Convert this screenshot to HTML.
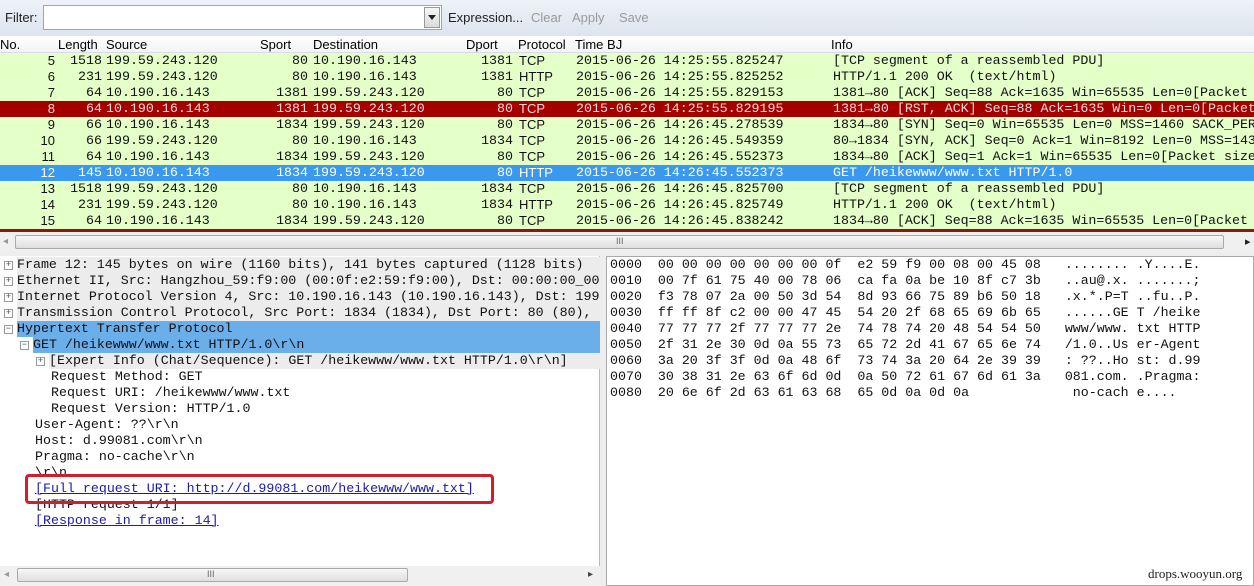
<!DOCTYPE html>
<html><head><meta charset="utf-8"><style>
*{margin:0;padding:0;box-sizing:border-box}
body{width:1254px;height:586px;overflow:hidden;background:#fff;position:relative;font-family:"Liberation Sans",sans-serif}
.a{position:absolute;white-space:pre}
.m{font-family:"Liberation Mono",monospace;font-size:13.3px}
.s{font-family:"Liberation Sans",sans-serif;font-size:13px}
.row{position:absolute;left:0;width:1254px;height:16px;background:#e4ffc8;line-height:16px;color:#101010}
.row span{position:absolute;white-space:pre;top:0}
.red{background:#a40000;color:#ffd8d8}
.sel{background:#3a99ee;color:#fff}
.c1{right:1199px;font-family:"Liberation Sans",sans-serif;font-size:13px}
.c2{right:1152px;font-family:"Liberation Mono",monospace;font-size:13.3px}
.c3{left:106px;font-family:"Liberation Mono",monospace;font-size:13.3px}
.c4{right:946px;font-family:"Liberation Mono",monospace;font-size:13.3px}
.c5{left:313px;font-family:"Liberation Mono",monospace;font-size:13.3px}
.c6{right:741px;font-family:"Liberation Mono",monospace;font-size:13.3px}
.c7{left:519px;font-family:"Liberation Sans",sans-serif;font-size:13px}
.c8{left:576px;font-family:"Liberation Mono",monospace;font-size:13.3px}
.c9{left:833px;font-family:"Liberation Mono",monospace;font-size:13.3px}
.d{position:absolute;height:16px;line-height:16px;font-family:"Liberation Mono",monospace;font-size:13.3px;white-space:pre;color:#111}
.bx{position:absolute;width:9px;height:9px;border:1px solid #999;background:#fff;font-size:9px;line-height:7px;text-align:center;color:#555;font-family:"Liberation Mono",monospace}
.h{position:absolute;left:610px;font-family:"Liberation Mono",monospace;font-size:13.3px;line-height:16px;white-space:pre;color:#111}
</style></head><body>
<div class="a" style="left:0;top:0;width:1254px;height:36px;background:linear-gradient(#eef2f8,#dde4ee)"></div>
<div class="a s" style="left:5px;top:10px;color:#222">Filter:</div>
<div class="a" style="left:43px;top:5px;width:399px;height:25px;background:#fff;border:1px solid #9aa6b8"></div>
<div class="a" style="left:424px;top:7px;width:16px;height:21px;border:1px solid #999;background:linear-gradient(#f6f6f6,#dcdcdc)"></div>
<div class="a" style="left:428px;top:15px;width:0;height:0;border-left:4px solid transparent;border-right:4px solid transparent;border-top:5px solid #222"></div>
<div class="a s" style="left:448px;top:10px;color:#222">Expression...</div>
<div class="a s" style="left:531px;top:10px;color:#999">Clear</div>
<div class="a s" style="left:572px;top:10px;color:#999">Apply</div>
<div class="a s" style="left:619px;top:10px;color:#999">Save</div>
<div class="a" style="left:0;top:36px;width:1254px;height:17px;background:linear-gradient(#fff,#f1f3f6);border-bottom:1px solid #d8dde4"></div>
<div class="a s" style="left:0;top:37px">No.</div>
<div class="a s" style="left:58px;top:37px">Length</div>
<div class="a s" style="left:106px;top:37px">Source</div>
<div class="a s" style="left:260px;top:37px">Sport</div>
<div class="a s" style="left:313px;top:37px">Destination</div>
<div class="a s" style="left:466px;top:37px">Dport</div>
<div class="a s" style="left:518px;top:37px">Protocol</div>
<div class="a s" style="left:575px;top:37px">Time BJ</div>
<div class="a s" style="left:831px;top:37px">Info</div>

<div class="row" style="top:53px"><span class="c1">5</span><span class="c2">1518</span><span class="c3">199.59.243.120</span><span class="c4">80</span><span class="c5">10.190.16.143</span><span class="c6">1381</span><span class="c7">TCP</span><span class="c8">2015-06-26 14:25:55.825247</span><span class="c9">[TCP segment of a reassembled PDU]</span></div>
<div class="row" style="top:69px"><span class="c1">6</span><span class="c2">231</span><span class="c3">199.59.243.120</span><span class="c4">80</span><span class="c5">10.190.16.143</span><span class="c6">1381</span><span class="c7">HTTP</span><span class="c8">2015-06-26 14:25:55.825252</span><span class="c9">HTTP/1.1 200 OK  (text/html)</span></div>
<div class="row" style="top:85px"><span class="c1">7</span><span class="c2">64</span><span class="c3">10.190.16.143</span><span class="c4">1381</span><span class="c5">199.59.243.120</span><span class="c6">80</span><span class="c7">TCP</span><span class="c8">2015-06-26 14:25:55.829153</span><span class="c9">1381→80 [ACK] Seq=88 Ack=1635 Win=65535 Len=0[Packet</span></div>
<div class="row red" style="top:101px"><span class="c1">8</span><span class="c2">64</span><span class="c3">10.190.16.143</span><span class="c4">1381</span><span class="c5">199.59.243.120</span><span class="c6">80</span><span class="c7">TCP</span><span class="c8">2015-06-26 14:25:55.829195</span><span class="c9">1381→80 [RST, ACK] Seq=88 Ack=1635 Win=0 Len=0[Packet</span></div>
<div class="row" style="top:117px"><span class="c1">9</span><span class="c2">66</span><span class="c3">10.190.16.143</span><span class="c4">1834</span><span class="c5">199.59.243.120</span><span class="c6">80</span><span class="c7">TCP</span><span class="c8">2015-06-26 14:26:45.278539</span><span class="c9">1834→80 [SYN] Seq=0 Win=65535 Len=0 MSS=1460 SACK_PER</span></div>
<div class="row" style="top:133px"><span class="c1">10</span><span class="c2">66</span><span class="c3">199.59.243.120</span><span class="c4">80</span><span class="c5">10.190.16.143</span><span class="c6">1834</span><span class="c7">TCP</span><span class="c8">2015-06-26 14:26:45.549359</span><span class="c9">80→1834 [SYN, ACK] Seq=0 Ack=1 Win=8192 Len=0 MSS=143</span></div>
<div class="row" style="top:149px"><span class="c1">11</span><span class="c2">64</span><span class="c3">10.190.16.143</span><span class="c4">1834</span><span class="c5">199.59.243.120</span><span class="c6">80</span><span class="c7">TCP</span><span class="c8">2015-06-26 14:26:45.552373</span><span class="c9">1834→80 [ACK] Seq=1 Ack=1 Win=65535 Len=0[Packet size</span></div>
<div class="row sel" style="top:165px"><span class="c1">12</span><span class="c2">145</span><span class="c3">10.190.16.143</span><span class="c4">1834</span><span class="c5">199.59.243.120</span><span class="c6">80</span><span class="c7">HTTP</span><span class="c8">2015-06-26 14:26:45.552373</span><span class="c9">GET /heikewww/www.txt HTTP/1.0</span></div>
<div class="row" style="top:181px"><span class="c1">13</span><span class="c2">1518</span><span class="c3">199.59.243.120</span><span class="c4">80</span><span class="c5">10.190.16.143</span><span class="c6">1834</span><span class="c7">TCP</span><span class="c8">2015-06-26 14:26:45.825700</span><span class="c9">[TCP segment of a reassembled PDU]</span></div>
<div class="row" style="top:197px"><span class="c1">14</span><span class="c2">231</span><span class="c3">199.59.243.120</span><span class="c4">80</span><span class="c5">10.190.16.143</span><span class="c6">1834</span><span class="c7">HTTP</span><span class="c8">2015-06-26 14:26:45.825749</span><span class="c9">HTTP/1.1 200 OK  (text/html)</span></div>
<div class="row" style="top:213px"><span class="c1">15</span><span class="c2">64</span><span class="c3">10.190.16.143</span><span class="c4">1834</span><span class="c5">199.59.243.120</span><span class="c6">80</span><span class="c7">TCP</span><span class="c8">2015-06-26 14:26:45.838242</span><span class="c9">1834→80 [ACK] Seq=88 Ack=1635 Win=65535 Len=0[Packet</span></div>
<div class="a" style="left:0;top:229px;width:1254px;height:3px;background:#8a1a10"></div>
<div class="a" style="left:0;top:232px;width:1254px;height:19px;background:#f0f0f0"></div>
<div class="a" style="left:15px;top:235px;width:1209px;height:14px;border:1px solid #aaa;border-radius:2px;background:linear-gradient(#f8f8f8,#dedede)"></div>
<div class="a" style="left:3px;top:236px;font-size:10px;color:#999">◂</div>
<div class="a" style="left:1245px;top:235px;font-size:11px;color:#222">▸</div>
<div class="a" style="left:616px;top:236px;font-size:9px;color:#666">III</div>
<div class="a" style="left:0;top:251px;width:1254px;height:5px;background:#eee"></div>

<div class="a" style="left:0;top:256px;width:600px;height:330px;background:#fff;border-right:1px solid #bbb"></div>
<div class="a" style="left:600px;top:256px;width:6px;height:330px;background:#eee"></div>
<div class="a" style="left:606px;top:256px;width:648px;height:330px;border:1px solid #aaa;background:#fff"></div>

<div class="d" style="left:17px;top:257px;width:583px;background:#ececec">Frame 12: 145 bytes on wire (1160 bits), 141 bytes captured (1128 bits)</div>
<div class="d" style="left:17px;top:273px;width:583px;background:#ececec;overflow:hidden">Ethernet II, Src: Hangzhou_59:f9:00 (00:0f:e2:59:f9:00), Dst: 00:00:00_00</div>
<div class="d" style="left:17px;top:289px;width:583px;background:#ececec;overflow:hidden">Internet Protocol Version 4, Src: 10.190.16.143 (10.190.16.143), Dst: 199</div>
<div class="d" style="left:17px;top:305px;width:583px;background:#ececec;overflow:hidden">Transmission Control Protocol, Src Port: 1834 (1834), Dst Port: 80 (80),</div>
<div class="d" style="left:17px;top:321px;width:583px;background:#6aaeea">Hypertext Transfer Protocol</div>
<div class="d" style="left:33px;top:337px;width:567px;background:#6aaeea">GET /heikewww/www.txt HTTP/1.0\r\n</div>
<div class="d" style="left:49px;top:353px;width:551px;background:#ececec">[Expert Info (Chat/Sequence): GET /heikewww/www.txt HTTP/1.0\r\n]</div>
<div class="d" style="left:51px;top:369px">Request Method: GET</div>
<div class="d" style="left:51px;top:385px">Request URI: /heikewww/www.txt</div>
<div class="d" style="left:51px;top:401px">Request Version: HTTP/1.0</div>
<div class="d" style="left:35px;top:417px">User-Agent: ??\r\n</div>
<div class="d" style="left:35px;top:433px">Host: d.99081.com\r\n</div>
<div class="d" style="left:35px;top:449px">Pragma: no-cache\r\n</div>
<div class="d" style="left:35px;top:465px">\r\n</div>
<div class="d" style="left:35px;top:481px;color:#1a1ab0;text-decoration:underline">[Full request URI: http://d.99081.com/heikewww/www.txt]</div>
<div class="d" style="left:35px;top:497px">[HTTP request 1/1]</div>
<div class="d" style="left:35px;top:513px;color:#1a1ab0;text-decoration:underline">[Response in frame: 14]</div>
<div class="a" style="left:25px;top:474px;width:469px;height:30px;border:3px solid #d01f2a;border-radius:4px"></div>

<div class="bx" style="left:4px;top:261px">+</div>
<div class="bx" style="left:4px;top:277px">+</div>
<div class="bx" style="left:4px;top:293px">+</div>
<div class="bx" style="left:4px;top:309px">+</div>
<div class="bx" style="left:4px;top:325px">−</div>
<div class="bx" style="left:20px;top:341px">−</div>
<div class="bx" style="left:36px;top:357px">+</div>

<div class="a" style="left:0;top:566px;width:600px;height:20px;background:#f0f0f0"></div>
<div class="a" style="left:17px;top:568px;width:391px;height:14px;border:1px solid #aaa;border-radius:2px;background:linear-gradient(#f8f8f8,#dedede)"></div>
<div class="a" style="left:4px;top:569px;font-size:10px;color:#999">◂</div>
<div class="a" style="left:588px;top:569px;font-size:10px;color:#444">▸</div>
<div class="a" style="left:207px;top:569px;font-size:9px;color:#666">III</div>

<div class="h" style="top:257px">0000  00 00 00 00 00 00 00 0f  e2 59 f9 00 08 00 45 08   ........ .Y....E.
0010  00 7f 61 75 40 00 78 06  ca fa 0a be 10 8f c7 3b   ..au@.x. .......;
0020  f3 78 07 2a 00 50 3d 54  8d 93 66 75 89 b6 50 18   .x.*.P=T ..fu..P.
0030  ff ff 8f c2 00 00 47 45  54 20 2f 68 65 69 6b 65   ......GE T /heike
0040  77 77 77 2f 77 77 77 2e  74 78 74 20 48 54 54 50   www/www. txt HTTP
0050  2f 31 2e 30 0d 0a 55 73  65 72 2d 41 67 65 6e 74   /1.0..Us er-Agent
0060  3a 20 3f 3f 0d 0a 48 6f  73 74 3a 20 64 2e 39 39   : ??..Ho st: d.99
0070  30 38 31 2e 63 6f 6d 0d  0a 50 72 61 67 6d 61 3a   081.com. .Pragma:
0080  20 6e 6f 2d 63 61 63 68  65 0d 0a 0d 0a             no-cach e....</div>
<div class="a" style="left:1148px;top:566px;font-family:'Liberation Serif',serif;font-size:13px;color:#222">drops.wooyun.org</div>
</body></html>
